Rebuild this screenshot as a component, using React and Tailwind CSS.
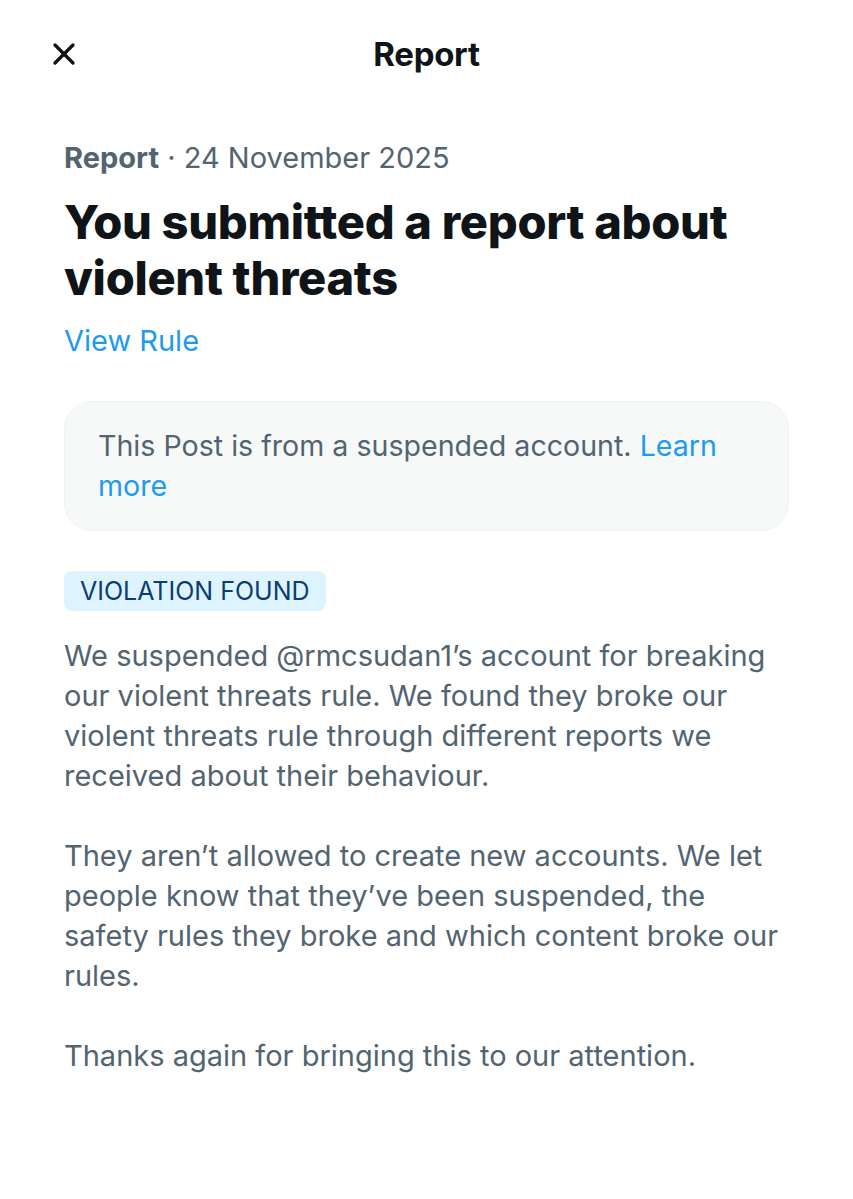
import { X } from "lucide-react";

function App() {
  return (
    <div
      className="min-h-[1199px] w-full bg-white text-[#0f1419]"
      style={{ fontFamily: "Inter, 'Noto Sans', sans-serif" }}
    >
      <div className="relative flex h-[110px] items-center justify-center">
        <button className="absolute left-[46px] top-[36px] text-[#0f1419]">
          <X size={36} strokeWidth={2.2} />
        </button>
        <h1 className="text-[33px] font-bold tracking-[-0.3px]">Report</h1>
      </div>

      <div className="px-[64px]">
        <p className="mt-[30px] text-[29px] leading-[36px] text-[#536471]">
          <span className="font-bold">Report</span> · 24 November 2025
        </p>
        <h2 className="mt-[18px] text-[47px] font-extrabold leading-[56px] tracking-[-0.3px]">
          You submitted a report about
          <br />
          violent threats
        </h2>
        <a className="mt-[15px] block text-[29px] leading-[40px] text-[#1d9bf0]">View Rule</a>

        <div className="mt-[40px] rounded-[28px] border border-[#eff3f4] bg-[#f7f9f9] px-[33px] py-[24px] text-[28.6px] leading-[40px] text-[#536471]">
          This Post is from a suspended account.{" "}
          <span className="text-[#1d9bf0]">Learn</span>
          <br />
          <span className="text-[#1d9bf0]">more</span>
        </div>

        <div className="mt-[40px] inline-block rounded-[8px] bg-[#ddf4ff] px-[16px] py-[3px] text-[25px] leading-[34px] text-[#0c3c74]">
          VIOLATION FOUND
        </div>

        <div className="mt-[25px] text-[29px] leading-[40px] text-[#536471]">
          <p>
            We suspended @rmcsudan1’s account for breaking
            <br />
            our violent threats rule. We found they broke our
            <br />
            violent threats rule through different reports we
            <br />
            received about their behaviour.
          </p>
          <p className="mt-[40px]">
            They aren’t allowed to create new accounts. We let
            <br />
            people know that they’ve been suspended, the
            <br />
            safety rules they broke and which content broke our
            <br />
            rules.
          </p>
          <p className="mt-[40px]">Thanks again for bringing this to our attention.</p>
        </div>
      </div>
    </div>
  );
}

export default App;
